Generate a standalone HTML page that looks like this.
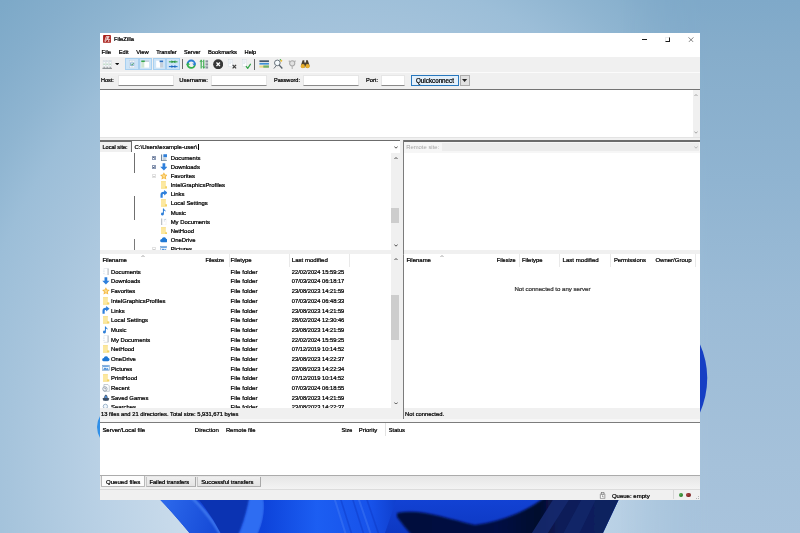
<!DOCTYPE html>
<html><head><meta charset="utf-8"><title>FileZilla</title>
<style>
html,body{margin:0;padding:0;}
body{filter:blur(0.3px);width:800px;height:533px;overflow:hidden;position:relative;background:#9bbbd6;font-family:"Liberation Sans",sans-serif;}
div,svg{position:absolute;}
.t{white-space:nowrap;-webkit-text-stroke:0.24px currentColor;}
</style></head><body>
<svg style="left:0;top:0" width="800" height="533" viewBox="0 0 800 533">
<defs>
<radialGradient id="bg" gradientUnits="userSpaceOnUse" cx="358" cy="480" r="600" gradientTransform="translate(358 480) scale(1 1.250) translate(-358 -480)">
<stop offset="0" stop-color="#d3e1ef"/><stop offset="0.3" stop-color="#c9dbeb"/><stop offset="0.417" stop-color="#bbd2e6"/><stop offset="0.583" stop-color="#a6c4dc"/><stop offset="0.667" stop-color="#9cbed8"/><stop offset="0.733" stop-color="#8fb5d1"/><stop offset="0.8" stop-color="#85aecc"/><stop offset="0.867" stop-color="#7da9c8"/><stop offset="0.93" stop-color="#7aa6c6"/><stop offset="1" stop-color="#79a5c6"/>
</radialGradient>
<linearGradient id="rs" x1="0" y1="0" x2="0" y2="1"><stop offset="0" stop-color="#7fa9c9"/><stop offset="0.1" stop-color="#86adcb"/><stop offset="0.34" stop-color="#90b4d1"/><stop offset="0.56" stop-color="#9bbbd6"/><stop offset="0.87" stop-color="#a5c1da"/><stop offset="1" stop-color="#a8c3dc"/></linearGradient>
<linearGradient id="rmg" gradientUnits="userSpaceOnUse" x1="620" y1="0" x2="710" y2="0"><stop offset="0" stop-color="#000"/><stop offset="1" stop-color="#fff"/></linearGradient>
<mask id="rm" maskUnits="userSpaceOnUse" x="600" y="0" width="200" height="533"><rect x="600" y="0" width="200" height="533" fill="url(#rmg)"/></mask>
<linearGradient id="b1" x1="0" y1="0" x2="1" y2="0"><stop offset="0" stop-color="#1a56e0"/><stop offset="0.5" stop-color="#1146d8"/><stop offset="1" stop-color="#0a2fb0"/></linearGradient>
<linearGradient id="b2" gradientUnits="userSpaceOnUse" x1="399" y1="0" x2="619" y2="0"><stop offset="0" stop-color="#04093c"/><stop offset="0.450" stop-color="#050c44"/><stop offset="0.640" stop-color="#04082c"/><stop offset="0.720" stop-color="#0b1c58"/><stop offset="1" stop-color="#0e2260"/></linearGradient>
<linearGradient id="b4" gradientUnits="userSpaceOnUse" x1="160" y1="500" x2="215" y2="520"><stop offset="0" stop-color="#2d6aec"/><stop offset="1" stop-color="#174cd8"/></linearGradient>
<linearGradient id="b5" gradientUnits="userSpaceOnUse" x1="0" y1="499" x2="0" y2="533"><stop offset="0" stop-color="#1242d4"/><stop offset="1" stop-color="#0d38c2"/></linearGradient>
<filter id="bl1" x="-20%" y="-20%" width="140%" height="140%"><feGaussianBlur stdDeviation="0.800"/></filter>
<filter id="bl2" x="-10%" y="-30%" width="120%" height="160%"><feGaussianBlur stdDeviation="1.300"/></filter>
<linearGradient id="b3" gradientUnits="userSpaceOnUse" x1="263" y1="0" x2="398" y2="0"><stop offset="0" stop-color="#0d43da"/><stop offset="0.400" stop-color="#1c5ef2"/><stop offset="0.800" stop-color="#1752ea"/><stop offset="1" stop-color="#0f3ecc"/></linearGradient>
</defs>
<rect width="800" height="533" fill="url(#bg)"/>
<rect x="600" y="0" width="200" height="533" fill="url(#rs)" mask="url(#rm)"/>
<!-- bloom petals -->
<path d="M100.500 415 Q93.500 427 100.500 439 Z" fill="#2f8fe8"/>
<path d="M699.500 343 Q715 378 699.500 414 Z" fill="#163fc4"/>
<clipPath id="bc"><path d="M159.500 499 L619 499 L603 533 L189.500 533 Q172 512 159.500 499 Z"/></clipPath>
<g clip-path="url(#bc)">
<rect x="150" y="495" width="480" height="40" fill="#1141d6"/>
<path d="M150 495 L191 495 Q212 515 222 536 L150 536Z" fill="url(#b4)"/>
<path d="M191 497 Q209 514 221 535" stroke="#4d88f5" stroke-width="2.400" fill="none" opacity="0.800" filter="url(#bl1)"/>
<path d="M195 495 L250 495 Q246 518 238 536 L222 536 Q212 515 195 495 Z" fill="#0b33b2"/>
<path d="M250 495 L263 495 Q267 515 257 536 L238 536 Q246 518 250 495Z" fill="#2f6df2" filter="url(#bl1)"/>
<path d="M263 495 L398 495 L384 536 L257 536 Q267 515 263 495Z" fill="url(#b3)"/>
<path d="M334 497 L346 535M358 497 L371 535" stroke="#5a8ef8" stroke-width="2" opacity="0.300"/>
<path d="M340 497 L352 535M352 497 L364 535M366 497 L379 535" stroke="#0a30b8" stroke-width="1.600" opacity="0.350"/>
<path d="M398 495 L550 495 L550 536 L384 536Z" fill="url(#b5)"/>
<path d="M397 513 C420 508 445 518 475 525 C505 521 530 509 545 497 L625 495 L625 540 L416 540 Q405 528 397 517 Z" fill="url(#b2)" filter="url(#bl2)"/>
<path d="M556 495 L572 495 L546 536 L530 536Z" fill="#15296e" opacity="0.900"/>
<path d="M584 495 L598 495 L578 536 L562 536Z" fill="#13286a" opacity="0.800"/>
</g>
</svg>
<div style="left:100.00px;top:32.80px;width:600.00px;height:467.20px;background:#f0f0f0;"></div>
<div style="left:100.00px;top:32.80px;width:600.00px;height:24.20px;background:#ffffff;"></div>
<svg style="left:103.10px;top:35.00px;" width="8" height="7.8" viewBox="0 0 16 16"><rect width="16" height="16" rx="0.800" fill="#a81e19"/><path d="M3.500 13l3-10h6l-.5 2H8l-.5 2h3l-.5 2h-3L5.500 13zM9 9h4.500L10 13h3" fill="none" stroke="#fff" stroke-width="1.500"/></svg>
<div class="t" style="left:113.90px;top:35.10px;line-height:8px;font-size:5.83px;color:#000;">FileZilla</div>
<div style="left:641.90px;top:38.80px;width:5.10px;height:0.90px;background:#1a1a1a;"></div>
<div style="left:664.80px;top:37.40px;width:5.40px;height:4.60px;border:0.9px solid #ececec;border-right-color:#1c1c1c;border-bottom-color:#1c1c1c;box-sizing:border-box;"></div>
<svg style="left:687.50px;top:36.80px;" width="6" height="5.6" viewBox="0 0 6 5.6"><path d="M0.400 0.300L5.600 5.300M5.600 0.300L0.400 5.300" stroke="#555" stroke-width="0.700"/></svg>
<div class="t" style="left:101.60px;top:47.80px;line-height:8px;font-size:5.83px;color:#000;">File</div>
<div class="t" style="left:118.70px;top:47.80px;line-height:8px;font-size:5.69px;color:#000;">Edit</div>
<div class="t" style="left:136.20px;top:47.80px;line-height:8px;font-size:5.86px;color:#000;">View</div>
<div class="t" style="left:156.20px;top:47.80px;line-height:8px;font-size:5.56px;color:#000;">Transfer</div>
<div class="t" style="left:184.00px;top:47.80px;line-height:8px;font-size:5.57px;color:#000;">Server</div>
<div class="t" style="left:208.00px;top:47.80px;line-height:8px;font-size:5.8px;color:#000;">Bookmarks</div>
<div class="t" style="left:244.60px;top:47.80px;line-height:8px;font-size:5.64px;color:#000;">Help</div>
<div style="left:100.00px;top:72.40px;width:600.00px;height:1.10px;background:#fbfbfb;"></div>
<div style="left:124.90px;top:58.00px;width:13.80px;height:12.00px;background:#cde4f7;border:0.5px solid #a8d0f0;box-sizing:border-box;"></div>
<div style="left:138.70px;top:58.00px;width:13.80px;height:12.00px;background:#cde4f7;border:0.5px solid #a8d0f0;box-sizing:border-box;"></div>
<div style="left:152.50px;top:58.00px;width:13.80px;height:12.00px;background:#cde4f7;border:0.5px solid #a8d0f0;box-sizing:border-box;"></div>
<div style="left:166.30px;top:58.00px;width:13.80px;height:12.00px;background:#cde4f7;border:0.5px solid #a8d0f0;box-sizing:border-box;"></div>
<div style="left:181.70px;top:59.20px;width:0.70px;height:9.80px;background:#6a6a6a;"></div>
<div style="left:254.40px;top:59.20px;width:0.70px;height:10.40px;background:#6a6a6a;"></div>
<svg style="left:101.60px;top:58.6px" width="10.4" height="10.4" viewBox="0 0 24 24"><rect x="2.500" y="3" width="5" height="15" fill="#f7f9fb" stroke="#c3cad2" stroke-width="0.800"/><rect x="9.500" y="3" width="5" height="15" fill="#f7f9fb" stroke="#c3cad2" stroke-width="0.800"/><rect x="16.500" y="3" width="5" height="15" fill="#f7f9fb" stroke="#c3cad2" stroke-width="0.800"/><path d="M3.500 12h3M10.500 12h3M17.500 12h3" stroke="#6fb87a" stroke-width="1.600"/><path d="M3.500 5.500h3M10.500 5.500h3M17.500 5.500h3" stroke="#9fb6cc" stroke-width="1.200"/><path d="M1 21.500h22" stroke="#4a4f55" stroke-width="1.600"/><path d="M5 18v3M12 18v3M19 18v3" stroke="#6a7077" stroke-width="1.600"/></svg>
<svg style="left:115.00px;top:62.80px;" width="4.4" height="2.3" viewBox="0 0 4.4 2.3"><path d="M0 0h4.400L2.200 2.300z" fill="#111"/></svg>
<svg style="left:126.60px;top:58.6px" width="10.4" height="10.4" viewBox="0 0 24 24"><rect x="6.500" y="3.500" width="11" height="17" fill="#fbfdfe" stroke="#b9c9d8" stroke-width="0.800"/><path d="M8.500 6h6M8.500 18h6" stroke="#b0bcc8" stroke-width="0.900"/><rect x="8" y="9" width="8" height="6.500" fill="#dcebf7" stroke="#4f86bd" stroke-width="1.100"/><path d="M9.500 12.200l2 2 3.500-4.500" stroke="#2f9a45" stroke-width="1.700" fill="none"/></svg>
<svg style="left:140.40px;top:58.6px" width="10.4" height="10.4" viewBox="0 0 24 24"><rect x="3" y="6" width="18" height="14" fill="#ffffff"/><rect x="3" y="6" width="7" height="14" fill="#cfe6d2"/><rect x="3" y="3.500" width="18" height="3" fill="#c2ccd6"/><rect x="3" y="3.500" width="8" height="3.500" fill="#35a84a"/></svg>
<svg style="left:154.20px;top:58.6px" width="10.4" height="10.4" viewBox="0 0 24 24"><rect x="5" y="4" width="16" height="16" fill="#ffffff"/><rect x="14" y="8" width="7" height="12" fill="#c6d0da"/><rect x="13" y="3.500" width="8" height="4" fill="#2c6fc0"/></svg>
<svg style="left:168.00px;top:58.6px" width="10.4" height="10.4" viewBox="0 0 24 24"><path d="M2 6.500h20" stroke="#35a84a" stroke-width="2.600"/><path d="M8 3l5 3.500-5 3.500zM17 3l-5 3.500 5 3.500z" fill="#2a9440"/><path d="M2 17.500h20" stroke="#2c7ad0" stroke-width="2.600"/><path d="M8 14l5 3.500-5 3.500zM17 14l-5 3.500 5 3.500z" fill="#1f64b8"/></svg>
<svg style="left:185.70px;top:58.6px" width="10.4" height="10.4" viewBox="0 0 24 24"><path d="M3.400 12a8.600 8.600 0 0 1 17.200 0" stroke="#2b7fd4" stroke-width="4.200" fill="none"/><path d="M20.600 12a8.600 8.600 0 0 1-17.200 0" stroke="#33b04a" stroke-width="4.200" fill="none"/><path d="M14.500 10.500h9.500l-4.700 5.500z" fill="#2b7fd4"/><path d="M9.500 13.500H0l4.700-5.500z" fill="#33b04a"/></svg>
<svg style="left:199.40px;top:58.6px" width="10.4" height="10.4" viewBox="0 0 24 24"><path d="M5 2v20M11 2v20" stroke="#35a84a" stroke-width="2.600"/><path d="M2 7l3-4 3 4M8 17l3 4 3-4" stroke="#35a84a" stroke-width="2" fill="none"/><rect x="15" y="3" width="6" height="5" fill="#8a949e"/><rect x="15" y="10" width="6" height="5" fill="#8a949e"/><rect x="15" y="17" width="6" height="5" fill="#8a949e"/></svg>
<svg style="left:213.00px;top:58.6px" width="10.4" height="10.4" viewBox="0 0 24 24"><circle cx="12" cy="12" r="11.600" fill="#383838"/><path d="M8 8l8 8M16 8l-8 8" stroke="#fff" stroke-width="3"/></svg>
<svg style="left:227.20px;top:58.6px" width="10.4" height="10.4" viewBox="0 0 24 24"><rect x="3" y="1.500" width="10" height="16" fill="#fdfeff" stroke="#c9d3dc" stroke-width="0.900"/><path d="M5 4.500h6M5 7.500h6M5 10.500h4" stroke="#c5d2de" stroke-width="1.200"/><path d="M13 13.500l8 8M21 13.500l-8 8" stroke="#3c3c3c" stroke-width="2.800"/></svg>
<svg style="left:240.90px;top:58.6px" width="10.4" height="10.4" viewBox="0 0 24 24"><rect x="3" y="1.500" width="10" height="16" fill="#fdfeff" stroke="#c9d3dc" stroke-width="0.900"/><path d="M5 4.500h6M5 7.500h6M5 10.500h4" stroke="#c5d2de" stroke-width="1.200"/><path d="M11.500 16.500l4 5 7-10.500" stroke="#33a648" stroke-width="3" fill="none"/></svg>
<svg style="left:258.60px;top:58.6px" width="10.4" height="10.4" viewBox="0 0 24 24"><rect x="1" y="3" width="22" height="4" fill="#46596b"/><rect x="1" y="9" width="22" height="4" fill="#3d8fd6"/><rect x="1" y="15" width="22" height="5" fill="#e9d98a"/><rect x="10" y="15" width="13" height="5" fill="#6fb06a"/></svg>
<svg style="left:272.80px;top:58.6px" width="10.4" height="10.4" viewBox="0 0 24 24"><circle cx="10" cy="9" r="6.500" fill="#f5fafd" stroke="#555f69" stroke-width="2"/><path d="M14.500 14l7 8" stroke="#555f69" stroke-width="3"/><path d="M2 22l5-6" stroke="#555f69" stroke-width="2"/><circle cx="19" cy="4" r="2.500" fill="#e9b93a"/><circle cx="17" cy="1.500" r="1.500" fill="#35a84a"/></svg>
<svg style="left:286.60px;top:58.6px" width="10.4" height="10.4" viewBox="0 0 24 24"><circle cx="12" cy="10" r="6" fill="#e2e2e2" stroke="#a8a8a8" stroke-width="2.400"/><path d="M12 16v7M4 4l4 3M20 4l-4 3" stroke="#b0b0b0" stroke-width="2.400"/></svg>
<svg style="left:299.90px;top:58.6px" width="10.4" height="10.4" viewBox="0 0 24 24"><path d="M6 3h4v5h4V3h4l4 12a5 5 0 0 1-10 1h0a5 5 0 0 1-10-1z" fill="#4a4030"/><circle cx="6.500" cy="16.500" r="4.800" fill="#e8b030"/><circle cx="17.500" cy="16.500" r="4.800" fill="#e8b030"/></svg>
<div class="t" style="left:101.00px;top:76.40px;line-height:8px;font-size:5.5px;color:#000;">Host:</div>
<div style="left:117.70px;top:74.60px;width:56.60px;height:11.90px;background:#ffffff;border:0.4px solid #e6e6e6;border-bottom:0.8px solid #8a8a8a;box-sizing:border-box;"></div>
<div class="t" style="left:179.30px;top:76.40px;line-height:8px;font-size:5.87px;color:#000;">Username:</div>
<div style="left:210.90px;top:74.60px;width:56.60px;height:11.90px;background:#ffffff;border:0.4px solid #e6e6e6;border-bottom:0.8px solid #8a8a8a;box-sizing:border-box;"></div>
<div class="t" style="left:274.00px;top:76.40px;line-height:8px;font-size:5.57px;color:#000;">Password:</div>
<div style="left:303.20px;top:74.60px;width:56.30px;height:11.90px;background:#ffffff;border:0.4px solid #e6e6e6;border-bottom:0.8px solid #8a8a8a;box-sizing:border-box;"></div>
<div class="t" style="left:366.00px;top:76.40px;line-height:8px;font-size:5.68px;color:#000;">Port:</div>
<div style="left:381.00px;top:74.60px;width:24.30px;height:11.90px;background:#ffffff;border:0.4px solid #e6e6e6;border-bottom:0.8px solid #8a8a8a;box-sizing:border-box;"></div>
<div style="left:410.80px;top:75.00px;width:48.20px;height:11.00px;background:#e3f0fb;border:1px solid #2878be;box-sizing:border-box;"></div>
<div class="t" style="left:416.00px;top:77.00px;line-height:8px;font-size:6.27px;color:#000;">Quickconnect</div>
<div style="left:460.20px;top:75.00px;width:9.60px;height:11.00px;background:#e1e1e1;border:0.5px solid #adadad;box-sizing:border-box;"></div>
<svg style="left:462.40px;top:79.30px;" width="5.2" height="3" viewBox="0 0 5.2 3"><path d="M0 0h5.200L2.600 3z" fill="#222"/></svg>
<div style="left:100.00px;top:89.40px;width:600.00px;height:1.10px;background:#747474;"></div>
<div style="left:100.00px;top:90.40px;width:600.00px;height:46.80px;background:#ffffff;"></div>
<div style="left:692.60px;top:90.40px;width:7.40px;height:46.80px;background:#f0f0f0;"></div>
<svg style="left:694.30px;top:93.60px;" width="4" height="2.7" viewBox="0 0 4 2.7"><path d="M0.300 2.200L2 0.500L3.700 2.200" stroke="#9c9c9c" stroke-width="0.900" fill="none"/></svg>
<svg style="left:694.30px;top:131.00px;" width="4" height="2.7" viewBox="0 0 4 2.7"><path d="M0.300 0.500L2 2.200L3.700 0.500" stroke="#9c9c9c" stroke-width="0.900" fill="none"/></svg>
<div style="left:100.00px;top:137.20px;width:600.00px;height:0.80px;background:#e3e3e3;"></div>
<div style="left:100.00px;top:140.00px;width:300.00px;height:1.50px;background:#6c6c6c;"></div>
<div class="t" style="left:102.40px;top:142.90px;line-height:8px;font-size:5.62px;color:#000;">Local site:</div>
<div style="left:131.20px;top:141.40px;width:268.80px;height:11.60px;background:#ffffff;border-left:0.8px solid #6a6a6a;box-sizing:border-box;"></div>
<div class="t" style="left:134.50px;top:142.90px;line-height:8px;font-size:5.97px;color:#000;">C:\Users\example-user\</div>
<div style="left:197.60px;top:143.60px;width:0.60px;height:6.60px;background:#000;"></div>
<svg style="left:393.50px;top:146.00px;" width="4" height="2.7" viewBox="0 0 4 2.7"><path d="M0.300 0.500L2 2.200L3.700 0.500" stroke="#3c3c3c" stroke-width="0.900" fill="none"/></svg>
<div style="left:100.00px;top:152.40px;width:300.00px;height:97.90px;background:#ffffff;"></div>
<div style="left:391.40px;top:152.50px;width:8.20px;height:97.80px;background:#f0f0f0;"></div>
<svg style="left:393.50px;top:156.60px;" width="4" height="2.7" viewBox="0 0 4 2.7"><path d="M0.300 2.200L2 0.500L3.700 2.200" stroke="#3c3c3c" stroke-width="0.900" fill="none"/></svg>
<svg style="left:393.50px;top:244.40px;" width="4" height="2.7" viewBox="0 0 4 2.7"><path d="M0.300 0.500L2 2.200L3.700 0.500" stroke="#3c3c3c" stroke-width="0.900" fill="none"/></svg>
<div style="left:391.40px;top:208.10px;width:7.40px;height:14.70px;background:#cdcdcd;"></div>
<div style="left:134.30px;top:153.00px;width:0.70px;height:19.50px;background:#6f6f6f;"></div>
<div style="left:134.30px;top:196.00px;width:0.70px;height:23.50px;background:#6f6f6f;"></div>
<div style="left:134.30px;top:239.00px;width:0.70px;height:11.30px;background:#7a7a7a;"></div>
<div style="left:100px;top:152.5px;width:291px;height:97.8px;overflow:hidden">
<div style="left:52.20px;top:3.00px;width:4.20px;height:4.40px;background:#fff;border-top:0.6px solid #8d9bb5;border-bottom:0.6px solid #8d9bb5;border-left:0.4px solid #8d9bb5;border-right:0.4px solid #8d9bb5;box-sizing:border-box;"></div>
<div style="left:53.10px;top:4.90px;width:2.40px;height:0.60px;background:#5a6680;"></div>
<div style="left:54.00px;top:4.00px;width:0.60px;height:2.40px;background:#8d9bb5;"></div>
<svg style="left:59.60px;top:1.20px" width="7.8" height="7.8" viewBox="0 0 16 16"><path d="M2 1h12v14H2z" fill="#e6edf3"/><path d="M2 1h2v14H2zM2 13h12v2H2z" fill="#6d8299"/><path d="M7 0.500h7.500v6H7z" fill="#2f7fd8"/><path d="M6 8.500h6M6 11h6" stroke="#8fa3b8" stroke-width="1"/></svg>
<div class="t" style="left:70.70px;top:1.30px;line-height:8px;font-size:5.9px;color:#000;">Documents</div>
<div style="left:52.20px;top:12.12px;width:4.20px;height:4.40px;background:#fff;border-top:0.6px solid #8d9bb5;border-bottom:0.6px solid #8d9bb5;border-left:0.4px solid #8d9bb5;border-right:0.4px solid #8d9bb5;box-sizing:border-box;"></div>
<div style="left:53.10px;top:14.02px;width:2.40px;height:0.60px;background:#5a6680;"></div>
<div style="left:54.00px;top:13.12px;width:0.60px;height:2.40px;background:#8d9bb5;"></div>
<svg style="left:59.60px;top:10.32px" width="7.8" height="7.8" viewBox="0 0 16 16"><path d="M5.200 0.500h5.600v7h4.700L8 15.500 0.500 7.500h4.700z" fill="#2f80dc"/></svg>
<div class="t" style="left:70.70px;top:10.42px;line-height:8px;font-size:5.9px;color:#000;">Downloads</div>
<div style="left:52.20px;top:21.25px;width:4.20px;height:4.40px;background:#fff;border-top:0.6px solid #e2e2e2;border-bottom:0.6px solid #e2e2e2;border-left:0.4px solid #e2e2e2;border-right:0.4px solid #e2e2e2;box-sizing:border-box;"></div>
<div style="left:53.10px;top:23.15px;width:2.40px;height:0.60px;background:#cfcfcf;"></div>
<svg style="left:59.60px;top:19.45px" width="7.8" height="7.8" viewBox="0 0 16 16"><path d="M8 0.300l2.400 5 5.400.700-3.900 3.800 1 5.500L8 12.700l-4.900 2.600 1-5.500L.2 6l5.400-.700z" fill="#f4b73f"/><path d="M8 4l1.300 2.800 3 .4-2.200 2.100.6 3L8 10.800l-2.700 1.500.6-3L3.700 7.200l3-.4z" fill="#fbdc8e"/></svg>
<div class="t" style="left:70.70px;top:19.55px;line-height:8px;font-size:5.9px;color:#000;">Favorites</div>
<svg style="left:59.60px;top:28.57px" width="7.8" height="7.8" viewBox="0 0 16 16"><path d="M2 0.500h10V15.500h-10z" fill="#fce8a0"/><path d="M2 0.500h10v1.800h-10z" fill="#f8df8c"/><path d="M10.500 11h4.500v4.500h-4.500z" fill="#f3d264"/><path d="M2 14h8.500v1.500H2z" fill="#f7dc82"/></svg>
<div class="t" style="left:70.70px;top:28.67px;line-height:8px;font-size:5.9px;color:#000;">IntelGraphicsProfiles</div>
<svg style="left:59.60px;top:37.70px" width="7.8" height="7.8" viewBox="0 0 16 16"><path d="M1 16V9.500C1 5.500 3.500 3.500 7 3.500h1.500V0l7 5.800-7 5.700V8H7.500C6 8 5.500 9 5.500 10.500V16z" fill="#2f80dc"/></svg>
<div class="t" style="left:70.70px;top:37.80px;line-height:8px;font-size:5.9px;color:#000;">Links</div>
<svg style="left:59.60px;top:46.82px" width="7.8" height="7.8" viewBox="0 0 16 16"><path d="M2 0.500h10V15.500h-10z" fill="#fce8a0"/><path d="M2 0.500h10v1.800h-10z" fill="#f8df8c"/><path d="M10.500 11h4.500v4.500h-4.500z" fill="#f3d264"/><path d="M2 14h8.500v1.500H2z" fill="#f7dc82"/></svg>
<div class="t" style="left:70.70px;top:46.92px;line-height:8px;font-size:5.9px;color:#000;">Local Settings</div>
<svg style="left:59.60px;top:55.95px" width="7.8" height="7.8" viewBox="0 0 16 16"><path d="M6 1h2c.5 3 4 3.5 4 7-.8-1.8-2-2.400-4-2.600V12.500a3 3 0 1 1-2-2.800z" fill="#2f7fd8"/></svg>
<div class="t" style="left:70.70px;top:56.05px;line-height:8px;font-size:5.9px;color:#000;">Music</div>
<svg style="left:59.60px;top:65.07px" width="7.8" height="7.8" viewBox="0 0 16 16"><path d="M3.500 1h9v14h-9z" fill="#ffffff"/><path d="M3.500 1v14" stroke="#7d8791" stroke-width="1.300"/><path d="M3.500 15h9" stroke="#c5cbd1" stroke-width="1"/><path d="M12.500 1v14" stroke="#dfe3e7" stroke-width="0.800"/><path d="M8 3h1.500M10.500 3H12M8 6h1.500" stroke="#8fa8c0" stroke-width="1.400"/></svg>
<div class="t" style="left:70.70px;top:65.17px;line-height:8px;font-size:5.9px;color:#000;">My Documents</div>
<svg style="left:59.60px;top:74.20px" width="7.8" height="7.8" viewBox="0 0 16 16"><path d="M2 0.500h10V15.500h-10z" fill="#fce8a0"/><path d="M2 0.500h10v1.800h-10z" fill="#f8df8c"/><path d="M10.500 11h4.500v4.500h-4.500z" fill="#f3d264"/><path d="M2 14h8.500v1.500H2z" fill="#f7dc82"/></svg>
<div class="t" style="left:70.70px;top:74.30px;line-height:8px;font-size:5.9px;color:#000;">NetHood</div>
<svg style="left:59.60px;top:83.32px" width="7.8" height="7.8" viewBox="0 0 16 16"><path d="M4 13a3.500 3.500 0 0 1-.3-7A4.600 4.600 0 0 1 12.500 5.500 3.800 3.800 0 0 1 12.200 13z" fill="#1f78d4"/></svg>
<div class="t" style="left:70.70px;top:83.42px;line-height:8px;font-size:5.9px;color:#000;">OneDrive</div>
<div style="left:52.20px;top:94.25px;width:4.20px;height:4.40px;background:#fff;border-top:0.6px solid #e2e2e2;border-bottom:0.6px solid #e2e2e2;border-left:0.4px solid #e2e2e2;border-right:0.4px solid #e2e2e2;box-sizing:border-box;"></div>
<div style="left:53.10px;top:96.15px;width:2.40px;height:0.60px;background:#cfcfcf;"></div>
<svg style="left:59.60px;top:92.45px" width="7.8" height="7.8" viewBox="0 0 16 16"><rect x="1" y="2.500" width="14" height="11" fill="#eaf3fb" stroke="#5c8fc4" stroke-width="1"/><path d="M2 12l4-5 3 3 2-2 3 4z" fill="#3b86d6"/><rect x="2" y="3.500" width="12" height="2" fill="#3b86d6"/></svg>
<div class="t" style="left:70.70px;top:92.55px;line-height:8px;font-size:5.9px;color:#000;">Pictures</div>
</div>
<div style="left:100.00px;top:253.50px;width:300.00px;height:0.80px;background:#9a9a9a;"></div>
<div style="left:100.00px;top:254.30px;width:300.00px;height:154.00px;background:#ffffff;"></div>
<div style="left:391.40px;top:254.30px;width:8.20px;height:154.00px;background:#f0f0f0;"></div>
<svg style="left:393.50px;top:257.60px;" width="4" height="2.7" viewBox="0 0 4 2.7"><path d="M0.300 2.200L2 0.500L3.700 2.200" stroke="#3c3c3c" stroke-width="0.900" fill="none"/></svg>
<svg style="left:393.50px;top:401.60px;" width="4" height="2.7" viewBox="0 0 4 2.7"><path d="M0.300 0.500L2 2.200L3.700 0.500" stroke="#3c3c3c" stroke-width="0.900" fill="none"/></svg>
<div style="left:391.40px;top:295.30px;width:7.40px;height:45.00px;background:#cdcdcd;"></div>
<div style="left:228.70px;top:254.30px;width:0.60px;height:12.50px;background:#e9e9e9;"></div>
<div style="left:288.60px;top:254.30px;width:0.60px;height:12.50px;background:#e9e9e9;"></div>
<div style="left:349.40px;top:254.30px;width:0.60px;height:12.50px;background:#e9e9e9;"></div>
<svg style="left:141.00px;top:254.80px;" width="4" height="2.7" viewBox="0 0 4 2.7"><path d="M0.300 2.200L2 0.500L3.700 2.200" stroke="#9a9a9a" stroke-width="0.900" fill="none"/></svg>
<div class="t" style="left:102.40px;top:256.20px;line-height:8px;font-size:5.98px;color:#000;">Filename</div>
<div class="t" style="left:205.40px;top:256.20px;line-height:8px;font-size:5.5px;color:#000;">Filesize</div>
<div class="t" style="left:230.60px;top:256.20px;line-height:8px;font-size:6.0px;color:#000;">Filetype</div>
<div class="t" style="left:291.80px;top:256.20px;line-height:8px;font-size:6.07px;color:#000;">Last modified</div>
<div style="left:100px;top:254.3px;width:291px;height:154px;overflow:hidden">
<svg style="left:1.90px;top:13.40px" width="7.8" height="7.8" viewBox="0 0 16 16"><path d="M3.500 1h9v14h-9z" fill="#ffffff"/><path d="M12.500 1v14" stroke="#7d8791" stroke-width="1.300"/><path d="M3.500 15h9" stroke="#b9c0c7" stroke-width="1"/><path d="M3.500 1h9" stroke="#d5dadf" stroke-width="1"/><path d="M4 3.500v1.500M4 7v1.500M4 10.500v1.500" stroke="#9fb4c8" stroke-width="1.400"/></svg>
<div class="t" style="left:11.00px;top:13.50px;line-height:8px;font-size:5.9px;color:#000;">Documents</div>
<div class="t" style="left:130.60px;top:13.50px;line-height:8px;font-size:6.15px;color:#000;">File folder</div>
<div class="t" style="left:191.80px;top:13.50px;line-height:8px;font-size:5.73px;color:#000;">22/02/2024 15:59:25</div>
<svg style="left:1.90px;top:23.08px" width="7.8" height="7.8" viewBox="0 0 16 16"><path d="M5.200 0.500h5.600v7h4.700L8 15.500 0.500 7.500h4.700z" fill="#2f80dc"/></svg>
<div class="t" style="left:11.00px;top:23.18px;line-height:8px;font-size:5.9px;color:#000;">Downloads</div>
<div class="t" style="left:130.60px;top:23.18px;line-height:8px;font-size:6.15px;color:#000;">File folder</div>
<div class="t" style="left:191.80px;top:23.18px;line-height:8px;font-size:5.73px;color:#000;">07/03/2024 06:18:17</div>
<svg style="left:1.90px;top:32.76px" width="7.8" height="7.8" viewBox="0 0 16 16"><path d="M8 0.300l2.400 5 5.400.700-3.900 3.800 1 5.500L8 12.700l-4.900 2.600 1-5.500L.2 6l5.400-.700z" fill="#f4b73f"/><path d="M8 4l1.300 2.800 3 .4-2.200 2.100.6 3L8 10.800l-2.700 1.500.6-3L3.700 7.200l3-.4z" fill="#fbdc8e"/></svg>
<div class="t" style="left:11.00px;top:32.86px;line-height:8px;font-size:5.9px;color:#000;">Favorites</div>
<div class="t" style="left:130.60px;top:32.86px;line-height:8px;font-size:6.15px;color:#000;">File folder</div>
<div class="t" style="left:191.80px;top:32.86px;line-height:8px;font-size:5.73px;color:#000;">23/08/2023 14:21:59</div>
<svg style="left:1.90px;top:42.44px" width="7.8" height="7.8" viewBox="0 0 16 16"><path d="M2 0.500h10V15.500h-10z" fill="#fce8a0"/><path d="M2 0.500h10v1.800h-10z" fill="#f8df8c"/><path d="M10.500 11h4.500v4.500h-4.500z" fill="#f3d264"/><path d="M2 14h8.500v1.500H2z" fill="#f7dc82"/></svg>
<div class="t" style="left:11.00px;top:42.54px;line-height:8px;font-size:5.9px;color:#000;">IntelGraphicsProfiles</div>
<div class="t" style="left:130.60px;top:42.54px;line-height:8px;font-size:6.15px;color:#000;">File folder</div>
<div class="t" style="left:191.80px;top:42.54px;line-height:8px;font-size:5.73px;color:#000;">07/03/2024 06:48:33</div>
<svg style="left:1.90px;top:52.12px" width="7.8" height="7.8" viewBox="0 0 16 16"><path d="M1 16V9.500C1 5.500 3.500 3.500 7 3.500h1.500V0l7 5.800-7 5.700V8H7.500C6 8 5.500 9 5.500 10.500V16z" fill="#2f80dc"/></svg>
<div class="t" style="left:11.00px;top:52.22px;line-height:8px;font-size:5.9px;color:#000;">Links</div>
<div class="t" style="left:130.60px;top:52.22px;line-height:8px;font-size:6.15px;color:#000;">File folder</div>
<div class="t" style="left:191.80px;top:52.22px;line-height:8px;font-size:5.73px;color:#000;">23/08/2023 14:21:59</div>
<svg style="left:1.90px;top:61.80px" width="7.8" height="7.8" viewBox="0 0 16 16"><path d="M2 0.500h10V15.500h-10z" fill="#fce8a0"/><path d="M2 0.500h10v1.800h-10z" fill="#f8df8c"/><path d="M10.500 11h4.500v4.500h-4.500z" fill="#f3d264"/><path d="M2 14h8.500v1.500H2z" fill="#f7dc82"/></svg>
<div class="t" style="left:11.00px;top:61.90px;line-height:8px;font-size:5.9px;color:#000;">Local Settings</div>
<div class="t" style="left:130.60px;top:61.90px;line-height:8px;font-size:6.15px;color:#000;">File folder</div>
<div class="t" style="left:191.80px;top:61.90px;line-height:8px;font-size:5.73px;color:#000;">28/02/2024 12:30:46</div>
<svg style="left:1.90px;top:71.48px" width="7.8" height="7.8" viewBox="0 0 16 16"><path d="M6 1h2c.5 3 4 3.5 4 7-.8-1.8-2-2.400-4-2.600V12.500a3 3 0 1 1-2-2.800z" fill="#2f7fd8"/></svg>
<div class="t" style="left:11.00px;top:71.58px;line-height:8px;font-size:5.9px;color:#000;">Music</div>
<div class="t" style="left:130.60px;top:71.58px;line-height:8px;font-size:6.15px;color:#000;">File folder</div>
<div class="t" style="left:191.80px;top:71.58px;line-height:8px;font-size:5.73px;color:#000;">23/08/2023 14:21:59</div>
<svg style="left:1.90px;top:81.16px" width="7.8" height="7.8" viewBox="0 0 16 16"><path d="M3.500 1h9v14h-9z" fill="#ffffff"/><path d="M12.500 1v14" stroke="#7d8791" stroke-width="1.300"/><path d="M3.500 15h9" stroke="#b9c0c7" stroke-width="1"/><path d="M3.500 1h9" stroke="#d5dadf" stroke-width="1"/><path d="M4 3.500v1.500M4 7v1.500M4 10.500v1.500" stroke="#9fb4c8" stroke-width="1.400"/></svg>
<div class="t" style="left:11.00px;top:81.26px;line-height:8px;font-size:5.9px;color:#000;">My Documents</div>
<div class="t" style="left:130.60px;top:81.26px;line-height:8px;font-size:6.15px;color:#000;">File folder</div>
<div class="t" style="left:191.80px;top:81.26px;line-height:8px;font-size:5.73px;color:#000;">22/02/2024 15:59:25</div>
<svg style="left:1.90px;top:90.84px" width="7.8" height="7.8" viewBox="0 0 16 16"><path d="M2 0.500h10V15.500h-10z" fill="#fce8a0"/><path d="M2 0.500h10v1.800h-10z" fill="#f8df8c"/><path d="M10.500 11h4.500v4.500h-4.500z" fill="#f3d264"/><path d="M2 14h8.500v1.500H2z" fill="#f7dc82"/></svg>
<div class="t" style="left:11.00px;top:90.94px;line-height:8px;font-size:5.9px;color:#000;">NetHood</div>
<div class="t" style="left:130.60px;top:90.94px;line-height:8px;font-size:6.15px;color:#000;">File folder</div>
<div class="t" style="left:191.80px;top:90.94px;line-height:8px;font-size:5.73px;color:#000;">07/12/2019 10:14:52</div>
<svg style="left:1.90px;top:100.52px" width="7.8" height="7.8" viewBox="0 0 16 16"><path d="M4 13a3.500 3.500 0 0 1-.3-7A4.600 4.600 0 0 1 12.500 5.500 3.800 3.800 0 0 1 12.200 13z" fill="#1f78d4"/></svg>
<div class="t" style="left:11.00px;top:100.62px;line-height:8px;font-size:5.9px;color:#000;">OneDrive</div>
<div class="t" style="left:130.60px;top:100.62px;line-height:8px;font-size:6.15px;color:#000;">File folder</div>
<div class="t" style="left:191.80px;top:100.62px;line-height:8px;font-size:5.73px;color:#000;">23/08/2023 14:22:37</div>
<svg style="left:1.90px;top:110.20px" width="7.8" height="7.8" viewBox="0 0 16 16"><rect x="1" y="2.500" width="14" height="11" fill="#eaf3fb" stroke="#5c8fc4" stroke-width="1"/><path d="M2 12l4-5 3 3 2-2 3 4z" fill="#3b86d6"/><rect x="2" y="3.500" width="12" height="2" fill="#3b86d6"/></svg>
<div class="t" style="left:11.00px;top:110.30px;line-height:8px;font-size:5.9px;color:#000;">Pictures</div>
<div class="t" style="left:130.60px;top:110.30px;line-height:8px;font-size:6.15px;color:#000;">File folder</div>
<div class="t" style="left:191.80px;top:110.30px;line-height:8px;font-size:5.73px;color:#000;">23/08/2023 14:22:34</div>
<svg style="left:1.90px;top:119.88px" width="7.8" height="7.8" viewBox="0 0 16 16"><path d="M2 0.500h10V15.500h-10z" fill="#fce8a0"/><path d="M2 0.500h10v1.800h-10z" fill="#f8df8c"/><path d="M10.500 11h4.500v4.500h-4.500z" fill="#f3d264"/><path d="M2 14h8.500v1.500H2z" fill="#f7dc82"/></svg>
<div class="t" style="left:11.00px;top:119.98px;line-height:8px;font-size:5.9px;color:#000;">PrintHood</div>
<div class="t" style="left:130.60px;top:119.98px;line-height:8px;font-size:6.15px;color:#000;">File folder</div>
<div class="t" style="left:191.80px;top:119.98px;line-height:8px;font-size:5.73px;color:#000;">07/12/2019 10:14:52</div>
<svg style="left:1.90px;top:129.56px" width="7.8" height="7.8" viewBox="0 0 16 16"><path d="M4 1h8l3 3v11H4z" fill="#fdfdfd" stroke="#8a99a8" stroke-width="1"/><circle cx="6" cy="10" r="4.500" fill="#f4f8fb" stroke="#667788" stroke-width="1.200"/><path d="M6 7.500V10h2" stroke="#445" stroke-width="1" fill="none"/></svg>
<div class="t" style="left:11.00px;top:129.66px;line-height:8px;font-size:5.9px;color:#000;">Recent</div>
<div class="t" style="left:130.60px;top:129.66px;line-height:8px;font-size:6.15px;color:#000;">File folder</div>
<div class="t" style="left:191.80px;top:129.66px;line-height:8px;font-size:5.73px;color:#000;">07/03/2024 06:18:55</div>
<svg style="left:1.90px;top:139.24px" width="7.8" height="7.8" viewBox="0 0 16 16"><path d="M8 1l3 3v3l4 2-2 5H9l-1 1-1-1H3L1 9l4-2V4z" fill="#3c4f66"/><path d="M8 3l2 2v3H6V5z" fill="#4d8fd8"/></svg>
<div class="t" style="left:11.00px;top:139.34px;line-height:8px;font-size:5.9px;color:#000;">Saved Games</div>
<div class="t" style="left:130.60px;top:139.34px;line-height:8px;font-size:6.15px;color:#000;">File folder</div>
<div class="t" style="left:191.80px;top:139.34px;line-height:8px;font-size:5.73px;color:#000;">23/08/2023 14:21:59</div>
<svg style="left:1.90px;top:148.92px" width="7.8" height="7.8" viewBox="0 0 16 16"><circle cx="7" cy="7" r="4.500" fill="#eef6fc" stroke="#8aa4bd" stroke-width="1.600"/><path d="M10.500 10.500l4 4" stroke="#8aa4bd" stroke-width="2"/></svg>
<div class="t" style="left:11.00px;top:149.02px;line-height:8px;font-size:5.9px;color:#000;">Searches</div>
<div class="t" style="left:130.60px;top:149.02px;line-height:8px;font-size:6.15px;color:#000;">File folder</div>
<div class="t" style="left:191.80px;top:149.02px;line-height:8px;font-size:5.73px;color:#000;">23/08/2023 14:22:37</div>
</div>
<div class="t" style="left:101.00px;top:410.10px;line-height:8px;font-size:5.79px;color:#000;">13 files and 21 directories. Total size: 5,931,671 bytes</div>
<div style="left:403.00px;top:140.00px;width:297.00px;height:1.50px;background:#6c6c6c;"></div>
<div style="left:403.00px;top:140.20px;width:0.90px;height:278.60px;background:#7c7c7c;"></div>
<div style="left:403.90px;top:141.50px;width:296.10px;height:11.00px;background:#f6f6f6;"></div>
<div class="t" style="left:406.20px;top:142.90px;line-height:8px;font-size:5.88px;color:#a4a4a4;-webkit-text-stroke:0;">Remote site:</div>
<div style="left:441.50px;top:142.60px;width:257.50px;height:8.80px;background:#ececec;"></div>
<svg style="left:693.50px;top:146.00px;" width="4" height="2.7" viewBox="0 0 4 2.7"><path d="M0.300 0.500L2 2.200L3.700 0.500" stroke="#b0b0b0" stroke-width="0.900" fill="none"/></svg>
<div style="left:403.90px;top:152.50px;width:296.10px;height:97.60px;background:#ffffff;"></div>
<div style="left:403.00px;top:253.50px;width:297.00px;height:0.80px;background:#9a9a9a;"></div>
<div style="left:403.90px;top:254.30px;width:296.10px;height:154.00px;background:#ffffff;"></div>
<div style="left:518.50px;top:254.30px;width:0.60px;height:12.50px;background:#e9e9e9;"></div>
<div style="left:559.20px;top:254.30px;width:0.60px;height:12.50px;background:#e9e9e9;"></div>
<div style="left:610.20px;top:254.30px;width:0.60px;height:12.50px;background:#e9e9e9;"></div>
<div style="left:694.60px;top:254.30px;width:0.60px;height:12.50px;background:#e9e9e9;"></div>
<svg style="left:440.00px;top:254.80px;" width="4" height="2.7" viewBox="0 0 4 2.7"><path d="M0.300 2.200L2 0.500L3.700 2.200" stroke="#9a9a9a" stroke-width="0.900" fill="none"/></svg>
<div class="t" style="left:406.40px;top:256.20px;line-height:8px;font-size:5.98px;color:#000;">Filename</div>
<div class="t" style="left:496.80px;top:256.20px;line-height:8px;font-size:5.52px;color:#000;">Filesize</div>
<div class="t" style="left:521.90px;top:256.20px;line-height:8px;font-size:5.91px;color:#000;">Filetype</div>
<div class="t" style="left:562.50px;top:256.20px;line-height:8px;font-size:6.1px;color:#000;">Last modified</div>
<div class="t" style="left:613.90px;top:256.20px;line-height:8px;font-size:5.89px;color:#000;">Permissions</div>
<div class="t" style="left:655.40px;top:256.20px;line-height:8px;font-size:6.03px;color:#000;">Owner/Group</div>
<div class="t" style="left:514.40px;top:284.70px;line-height:8px;font-size:6.08px;color:#333;">Not connected to any server</div>
<div class="t" style="left:405.00px;top:410.10px;line-height:8px;font-size:5.8px;color:#000;">Not connected.</div>
<div style="left:100.00px;top:419.40px;width:600.00px;height:2.60px;background:#f7f7f7;"></div>
<div style="left:100.00px;top:422.00px;width:600.00px;height:1.00px;background:#7c7c7c;"></div>
<div style="left:100.00px;top:423.00px;width:600.00px;height:52.00px;background:#ffffff;"></div>
<div style="left:385.30px;top:423.00px;width:0.60px;height:13.00px;background:#e2e2e2;"></div>
<div class="t" style="left:102.40px;top:425.60px;line-height:8px;font-size:5.97px;color:#000;">Server/Local file</div>
<div class="t" style="left:194.80px;top:425.60px;line-height:8px;font-size:6.11px;color:#000;">Direction</div>
<div class="t" style="left:225.90px;top:425.60px;line-height:8px;font-size:5.87px;color:#000;">Remote file</div>
<div class="t" style="left:341.50px;top:425.60px;line-height:8px;font-size:5.5px;color:#000;">Size</div>
<div class="t" style="left:358.80px;top:425.60px;line-height:8px;font-size:5.95px;color:#000;">Priority</div>
<div class="t" style="left:388.80px;top:425.60px;line-height:8px;font-size:5.71px;color:#000;">Status</div>
<div style="left:100.00px;top:476.00px;width:600.00px;height:12.60px;background:linear-gradient(#e6e6e6,#f3f3f3);"></div>
<div style="left:100.00px;top:475.10px;width:600.00px;height:1.00px;background:#ababab;"></div>
<div style="left:101.40px;top:475.80px;width:43.20px;height:11.70px;background:#fcfcfc;border:0.6px solid #b8b8b8;border-top:none;border-radius:0 0 1px 1px;box-sizing:border-box;"></div>
<div class="t" style="left:105.90px;top:477.90px;line-height:8px;font-size:6.13px;color:#000;">Queued files</div>
<div style="left:145.70px;top:476.60px;width:50.70px;height:10.60px;background:linear-gradient(#efefef,#e4e4e4);border:0.6px solid #c6c6c6;border-right-color:#a8a8a8;border-bottom-color:#b0b0b0;border-top:none;box-sizing:border-box;"></div>
<div class="t" style="left:149.40px;top:477.90px;line-height:8px;font-size:5.78px;color:#000;">Failed transfers</div>
<div style="left:197.00px;top:476.60px;width:64.30px;height:10.60px;background:linear-gradient(#efefef,#e4e4e4);border:0.6px solid #c6c6c6;border-right-color:#a8a8a8;border-bottom-color:#b0b0b0;border-top:none;box-sizing:border-box;"></div>
<div class="t" style="left:201.20px;top:477.90px;line-height:8px;font-size:5.8px;color:#000;">Successful transfers</div>
<div style="left:100.00px;top:489.20px;width:600.00px;height:0.60px;background:#dcdcdc;"></div>
<svg style="left:599.10px;top:491.60px;" width="7.2" height="7.2" viewBox="0 0 16 16"><rect x="3" y="4" width="10" height="11" rx="1" fill="#fafafa" stroke="#666" stroke-width="1.400"/><rect x="5" y="1.500" width="6" height="3.500" fill="#ddd" stroke="#666" stroke-width="1.200"/><path d="M8 7.500v3.500h2.500" stroke="#555" stroke-width="1.200" fill="none"/></svg>
<div class="t" style="left:611.90px;top:491.70px;line-height:8px;font-size:6.02px;color:#000;">Queue: empty</div>
<div style="left:672.90px;top:490.30px;width:0.60px;height:9.00px;background:#d6d6d6;"></div>
<div style="left:678.80px;top:492.80px;width:4.60px;height:4.60px;background:radial-gradient(circle at 35% 35%,#4fa84f,#1a6a1a);border-radius:50%;"></div>
<div style="left:686.30px;top:492.80px;width:4.60px;height:4.60px;background:radial-gradient(circle at 35% 35%,#a84444,#6a1414);border-radius:50%;"></div>
<div style="left:698.00px;top:497.80px;width:0.90px;height:0.90px;background:#b4b4b4;"></div>
<div style="left:696.40px;top:497.80px;width:0.90px;height:0.90px;background:#b4b4b4;"></div>
<div style="left:698.00px;top:496.20px;width:0.90px;height:0.90px;background:#b4b4b4;"></div>
</body></html>
